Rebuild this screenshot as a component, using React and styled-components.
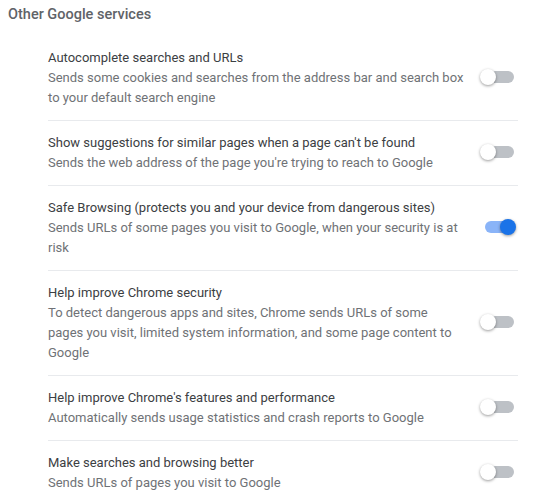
import React, { useState } from 'react';
import styled, { createGlobalStyle } from 'styled-components';

const GlobalStyle = createGlobalStyle`
  body {
    margin: 0;
    background: #fff;
    font-family: Roboto, "Liberation Sans", Arial, sans-serif;
  }
`;

const Page = styled.div`
  width: 534px;
  padding-top: 5px;
  box-sizing: border-box;
`;

const Heading = styled.h2`
  margin: 0 0 11px 8px;
  font-size: 14.5px;
  line-height: 20px;
  font-weight: 500;
  color: #5f6368;
`;

const List = styled.div`
  display: flex;
  flex-direction: column;
  margin: 0 16px 0 48px;
`;

const Row = styled.div`
  display: flex;
  align-items: center;
  gap: 14px;
  padding: 12px 0;
  border-bottom: 1px solid #e8eaed;

  &:last-child {
    border-bottom: none;
  }
`;

const Texts = styled.div`
  flex: 1;
  min-width: 0;
  font-size: 13px;
  line-height: 20px;
`;

const Title = styled.div`
  color: #3c4043;
`;

const Desc = styled.div`
  color: #6f7276;
`;

const Toggle = styled.button`
  position: relative;
  flex: none;
  width: 36px;
  height: 16px;
  margin: 0 2px 3px 0;
  padding: 0;
  border: none;
  background: none;
  cursor: pointer;

  &::before {
    content: '';
    position: absolute;
    left: ${(p) => (p.$on ? '5px' : '2px')};
    right: ${(p) => (p.$on ? '8px' : '2px')};
    top: 2px;
    height: 12px;
    border-radius: 6px;
    background: ${(p) => (p.$on ? '#8ab4f8' : '#bdc1c6')};
  }

  &::after {
    content: '';
    position: absolute;
    top: 0;
    left: ${(p) => (p.$on ? '20px' : '0')};
    width: 16px;
    height: 16px;
    border-radius: 50%;
    background: ${(p) => (p.$on ? '#1a73e8' : '#fff')};
    box-shadow: 0 1px 3px rgba(0, 0, 0, 0.4);
  }
`;

const items = [
  {
    title: 'Autocomplete searches and URLs',
    desc: 'Sends some cookies and searches from the address bar and search box to your default search engine',
    on: false,
  },
  {
    title: "Show suggestions for similar pages when a page can't be found",
    desc: "Sends the web address of the page you're trying to reach to Google",
    on: false,
  },
  {
    title: 'Safe Browsing (protects you and your device from dangerous sites)',
    desc: 'Sends URLs of some pages you visit to Google, when your security is at risk',
    on: true,
  },
  {
    title: 'Help improve Chrome security',
    desc: 'To detect dangerous apps and sites, Chrome sends URLs of some pages you visit, limited system information, and some page content to Google',
    on: false,
  },
  {
    title: "Help improve Chrome's features and performance",
    desc: 'Automatically sends usage statistics and crash reports to Google',
    on: false,
  },
  {
    title: 'Make searches and browsing better',
    desc: 'Sends URLs of pages you visit to Google',
    on: false,
  },
];

const App = () => {
  const [state, setState] = useState(items.map((i) => i.on));

  const flip = (idx) => setState((s) => s.map((v, i) => (i === idx ? !v : v)));

  return (
    <Page>
      <GlobalStyle />
      <Heading>Other Google services</Heading>
      <List>
        {items.map((item, idx) => (
          <Row key={item.title}>
            <Texts>
              <Title>{item.title}</Title>
              <Desc>{item.desc}</Desc>
            </Texts>
            <Toggle $on={state[idx]} onClick={() => flip(idx)} aria-label={item.title} />
          </Row>
        ))}
      </List>
    </Page>
  );
};

export default App;
